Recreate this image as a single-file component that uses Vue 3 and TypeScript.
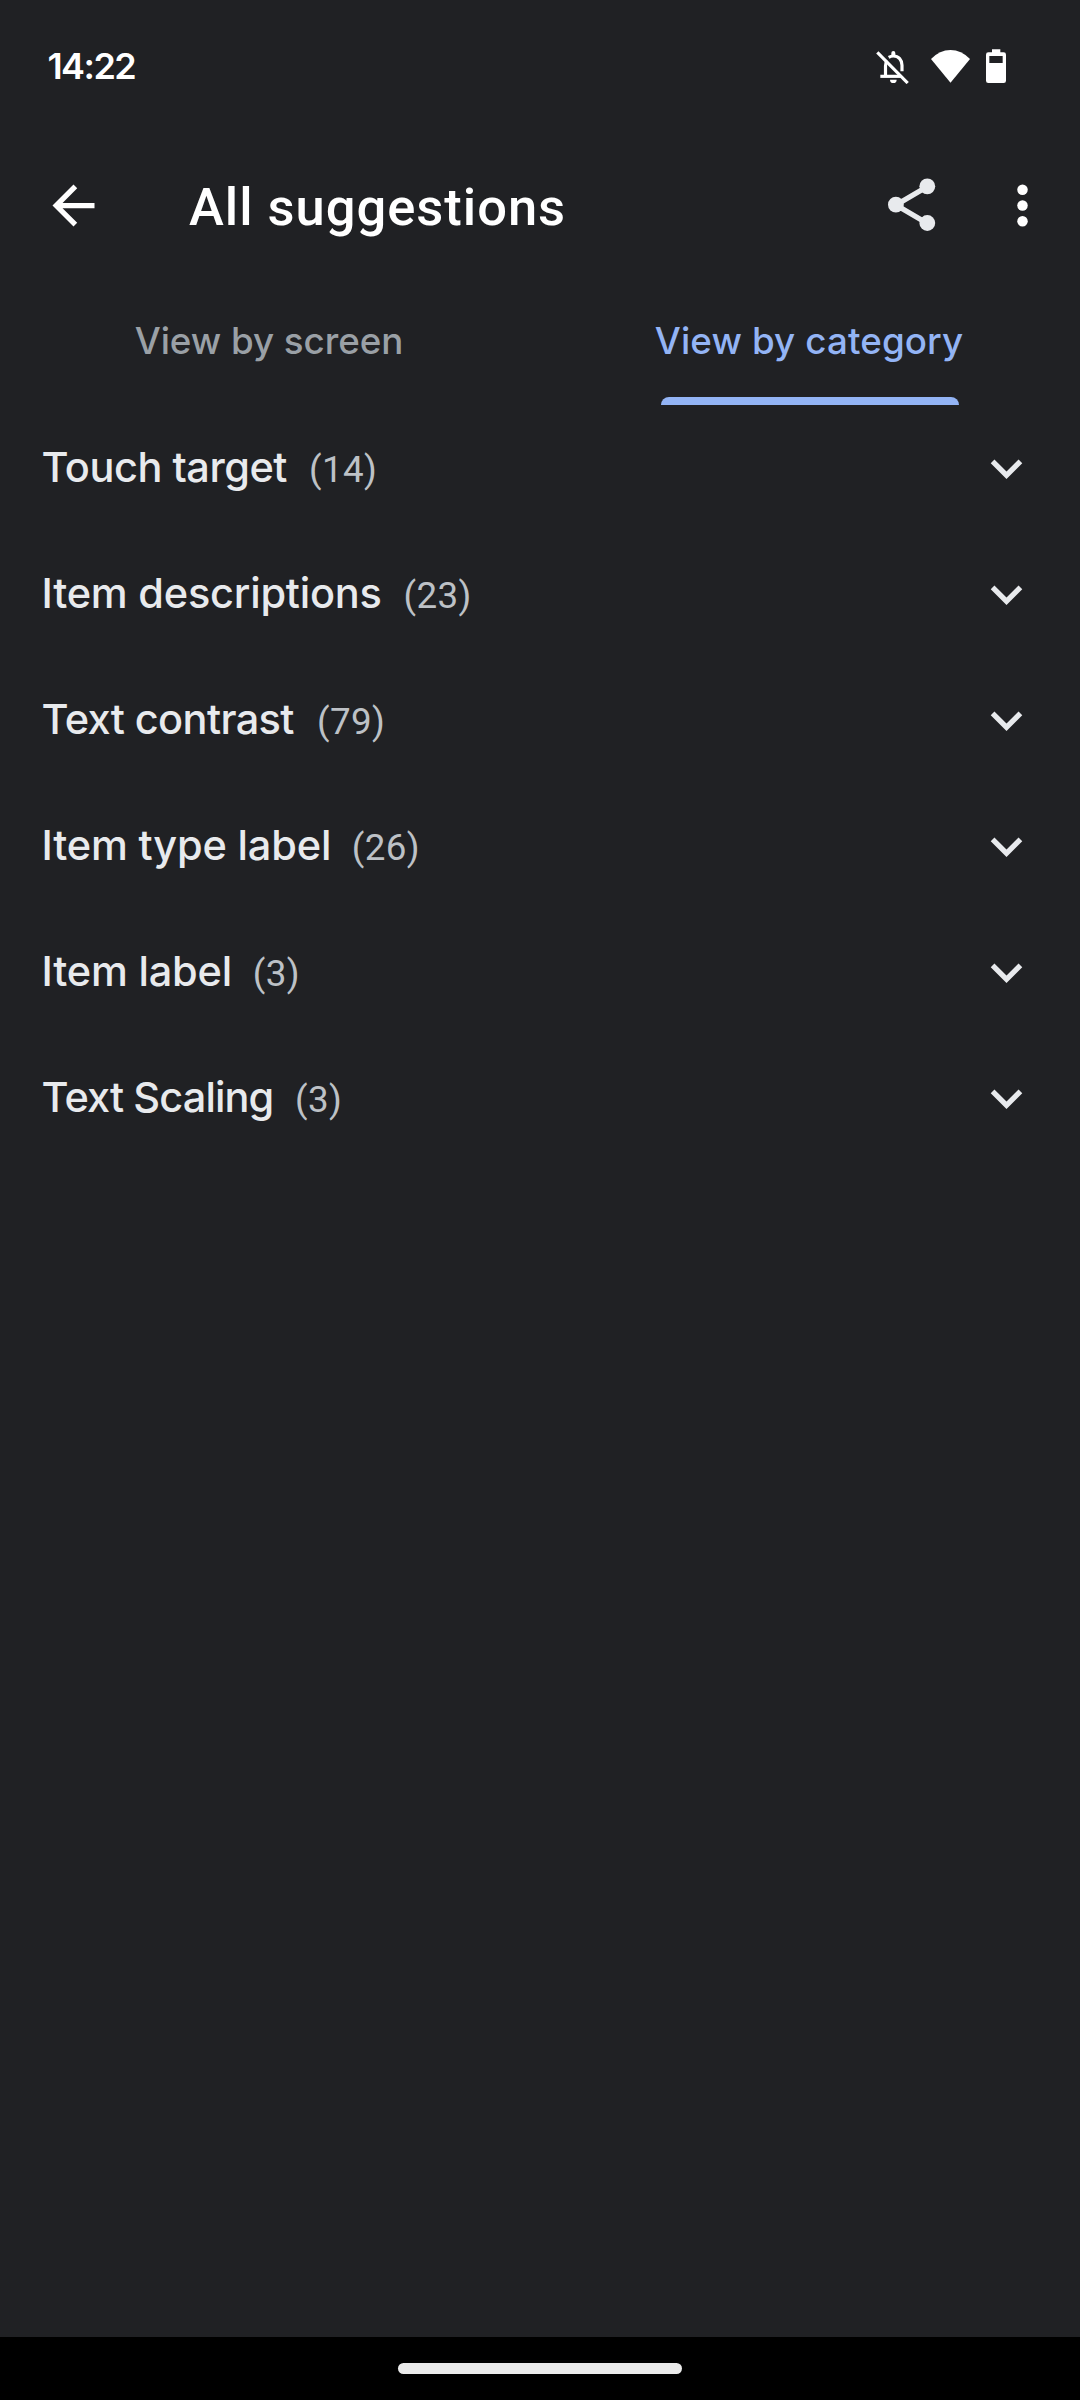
<script setup lang="ts">
interface Category {
  name: string
  count: number
  tracking: number
  width: number
}

const categories: Category[] = [
  { name: 'Touch target', count: 14, tracking: -0.48, width: 246.5 },
  { name: 'Item descriptions', count: 23, tracking: -0.22, width: 341 },
  { name: 'Text contrast', count: 79, tracking: -0.62, width: 254.5 },
  { name: 'Item type label', count: 26, tracking: -0.18, width: 289.3 },
  { name: 'Item label', count: 3, tracking: -0.2, width: 190.3 },
  { name: 'Text Scaling', count: 3, tracking: -0.9, width: 232.5 },
]
</script>

<template>
  <div class="screen">
    <header class="status-bar">
      <span class="clock">14:22</span>
      <svg class="bell" viewBox="48 57 99 105" aria-hidden="true">
        <g fill="none" stroke="#fff" stroke-width="9.500">
          <path d="M52 67 143 159" />
          <path d="M61 139H122" />
          <path d="M76.500 139V108Q76.500 97 81 91" />
          <path d="M86 82Q93 78 100 78C116 78 126 90 126 106V124" />
        </g>
        <path fill="#fff" d="M94 80V69a6 6 0 0 1 12 0V80ZM90 149h20a10 10 0 0 1-20 0Z" />
      </svg>
      <svg class="wifi" viewBox="213 57 117 99" aria-hidden="true">
        <path fill="#fff" d="M213 84Q239 57 271.500 57T330 84L271.500 155Z" />
      </svg>
      <svg class="battery" viewBox="378 57 60 102" aria-hidden="true">
        <path
          fill="#fff"
          fill-rule="evenodd"
          d="M396 58H421V67H431Q438 67 438 74V152Q438 159 431 159H385Q378 159 378 152V74Q378 67 385 67H396ZM388 78V99H428V78Z"
        />
      </svg>
    </header>

    <div class="app-bar">
      <svg class="back" viewBox="0 0 24 24" aria-label="Back">
        <path fill="#fff" d="M20 11H7.830l5.590-5.590L12 4l-8 8 8 8 1.410-1.410L7.830 13H20v-2z" />
      </svg>
      <h1 class="title">All suggestions</h1>
      <svg class="share" viewBox="0 0 48 54" aria-label="Share">
        <path d="M39.500 8.500 8 27 39.500 45.500" fill="none" stroke="#e8eaed" stroke-width="5.300" />
        <g fill="#e8eaed">
          <circle cx="39.300" cy="8.300" r="7.900" />
          <circle cx="7.900" cy="26.700" r="7.900" />
          <circle cx="39.300" cy="45" r="7.900" />
        </g>
      </svg>
      <svg class="more" viewBox="0 0 24 24" aria-label="More options">
        <g fill="#fff">
          <circle cx="12" cy="6" r="2" />
          <circle cx="12" cy="12" r="2" />
          <circle cx="12" cy="18" r="2" />
        </g>
      </svg>
    </div>

    <nav class="tabs">
      <div class="tab">
        <span class="tab-label by-screen">View by screen</span>
      </div>
      <div class="tab selected">
        <span class="tab-label by-category">View by category</span>
        <span class="indicator"></span>
      </div>
    </nav>

    <ul class="list">
      <li v-for="c in categories" :key="c.name" class="row">
        <span class="name" :style="{ letterSpacing: `${c.tracking}px`, width: `${c.width}px` }">{{ c.name }}</span>
        <span class="count">({{ c.count }})</span>
        <svg class="chevron" viewBox="0 0 24 24" aria-hidden="true">
          <path fill="#e8eaed" d="M16.590 8.590 12 13.170 7.410 8.590 6 10l6 6 6-6z" />
        </svg>
      </li>
    </ul>

    <footer class="nav-bar"><span class="pill"></span></footer>
  </div>
</template>

<style>
body {
  margin: 0;
  background: #202124;
}
</style>

<style scoped>
.screen {
  display: flex;
  flex-direction: column;
  width: 1080px;
  height: 2400px;
  overflow: hidden;
  background: #202124;
  color: #e8eaed;
  font-family: Inter, Roboto, sans-serif;
}
.screen svg {
  display: block;
  flex: none;
}
.status-bar {
  display: flex;
  align-items: center;
  box-sizing: border-box;
  height: 132px;
  padding: 0 74px 0 47.5px;
}
.clock {
  margin-right: auto;
  color: #fff;
  font-size: 36px;
  font-weight: 560;
  letter-spacing: -1.6px;
  line-height: 132px;
}
.bell {
  width: 33px;
  height: 35px;
}
.wifi {
  width: 39px;
  height: 33px;
  margin-left: 22px;
}
.battery {
  width: 20px;
  height: 34px;
  margin-left: 16px;
}
.app-bar {
  display: flex;
  align-items: center;
  height: 147px;
  padding-left: 42px;
}
.back {
  width: 63px;
  height: 63px;
}
.title {
  flex: 1;
  margin: 2px 0 0 84px;
  color: #fff;
  font: 500 52.5px/62px Roboto, sans-serif;
  letter-spacing: 0.98px;
}
.share {
  width: 48px;
  height: 54px;
  margin: 0 55px 1px 0;
}
.more {
  width: 63px;
  height: 63px;
  margin-right: 26px;
}
.tabs {
  display: flex;
  height: 126px;
}
.tab {
  display: flex;
  flex: 1;
  flex-direction: column;
  align-items: center;
  justify-content: space-between;
  color: #9aa0a6;
}
.tab.selected {
  color: #93b4f5;
}
.tab-label {
  height: 118px;
  margin-right: 2px;
  font-size: 36.75px;
  font-weight: 500;
  line-height: 124px;
  white-space: nowrap;
}
.by-screen {
  letter-spacing: -0.04px;
}
.by-category {
  letter-spacing: 0.12px;
}
.indicator {
  width: 298px;
  height: 8px;
  border-radius: 8px 8px 0 0;
  background: currentColor;
}
.list {
  flex: 1;
  margin: 1px 0 0;
  padding: 0;
  list-style: none;
}
.row {
  display: flex;
  align-items: baseline;
  height: 126px;
  padding-left: 41.5px;
}
.name {
  font-size: 41.5px;
  font-weight: 500;
  line-height: 122px;
  white-space: nowrap;
}
.count {
  margin-left: 21px;
  color: #bdc1c6;
  font: 400 36.75px/60px Roboto, sans-serif;
  letter-spacing: 0.36px;
}
.chevron {
  align-self: center;
  width: 63px;
  height: 63px;
  margin: 0 41.7px 2px auto;
}
.nav-bar {
  display: flex;
  justify-content: center;
  box-sizing: border-box;
  height: 63px;
  padding-top: 26px;
  background: #000;
}
.pill {
  width: 284px;
  height: 11px;
  border-radius: 5.5px;
  background: #ebebeb;
}
</style>
